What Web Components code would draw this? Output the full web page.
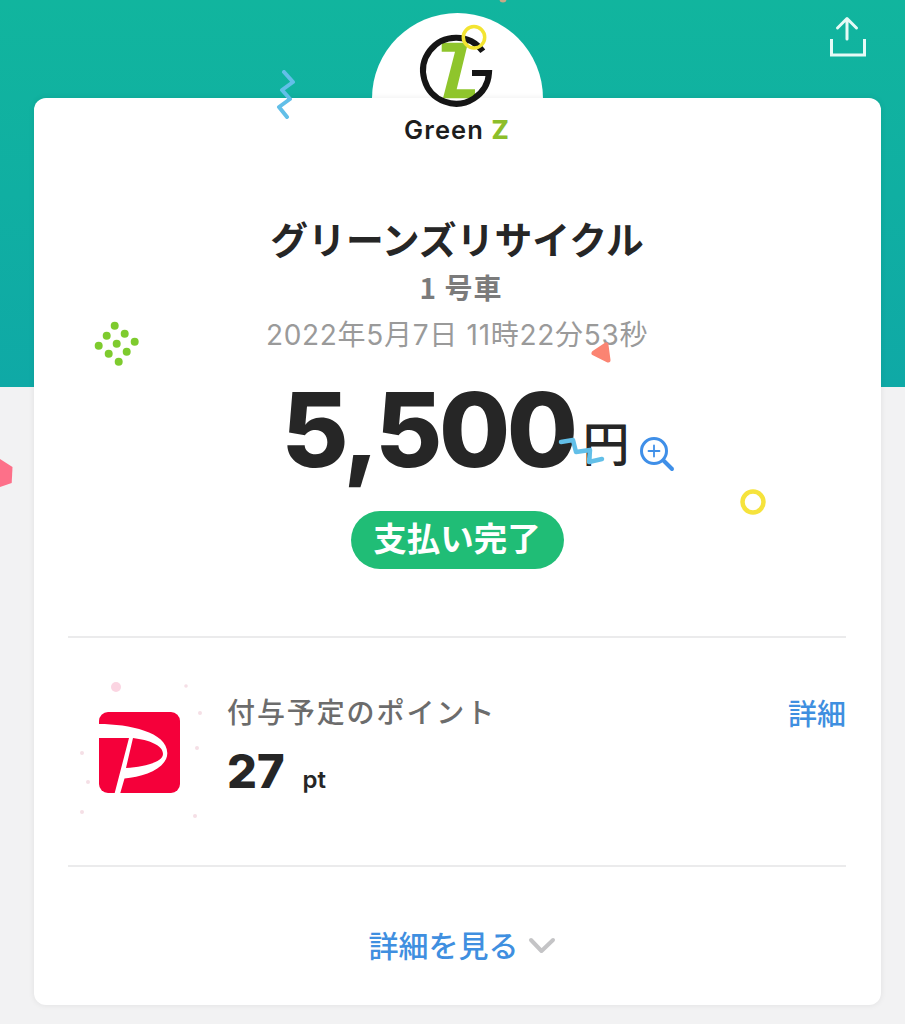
<!DOCTYPE html>
<html lang="ja">
<head>
<meta charset="utf-8">
<title>支払い完了</title>
<style>
  html, body { margin: 0; padding: 0; }
  body { font-family: "Inter", "Noto Sans CJK JP", sans-serif; }
</style>
</head>
<body>
<template id="pay-screen-tpl">
  <style>
    :host { display: block; position: relative; width: 905px; height: 1024px; overflow: hidden;
      background: linear-gradient(#11b59e 0, #0fa9a6 387px) 0 0 / 100% 387px no-repeat, #f2f2f3; }
    .bump { position: absolute; left: 372px; top: 13px; width: 171px; height: 171px; border-radius: 50%; background: #fff; }
    .share { position: absolute; left: 828px; top: 16px; }
    .deco { position: absolute; z-index: 3; }
    ::slotted(pay-card) { margin: 98px 24px 0 34px; }
  </style>
  <div class="bump"></div>
  <svg class="share" width="40" height="42" viewBox="0 0 40 42" fill="none" stroke="#e6faf6" stroke-width="3" stroke-linecap="round" stroke-linejoin="round">
    <path d="M19 23V3M9.500 12L19 2.500 28.500 12"/>
    <path d="M3.500 23V39H36.500V23" stroke-linecap="butt" stroke-linejoin="miter"/>
  </svg>
  <slot></slot>
  <svg class="deco" style="left:276px;top:70px" width="20" height="50" viewBox="0 0 20 50" fill="none" stroke="#62bfe8" stroke-width="4" stroke-linecap="round" stroke-linejoin="round">
    <path d="M8 2L17 12 6 20 14 29 3 37 11 47"/>
  </svg>
  <svg class="deco" style="left:92px;top:320px" width="48" height="48" viewBox="0 0 48 48" fill="#7ecb2e">
    <circle cx="22.700" cy="5.700" r="4"/><circle cx="14.700" cy="15.700" r="4"/><circle cx="32.700" cy="13.700" r="4"/>
    <circle cx="6.700" cy="25.700" r="4"/><circle cx="24.700" cy="23.700" r="4"/><circle cx="42.700" cy="21.700" r="4"/>
    <circle cx="16.700" cy="33.700" r="4"/><circle cx="34.700" cy="31.700" r="4"/><circle cx="26.700" cy="41.700" r="4"/>
  </svg>
  <svg class="deco" style="left:588px;top:341px" width="24" height="24" viewBox="0 0 24 24" fill="#fb8472" stroke="#fb8472" stroke-width="5" stroke-linejoin="round">
    <path d="M6 12L18 4 20 19Z"/>
  </svg>
  <svg class="deco" style="left:558px;top:436px" width="48" height="30" viewBox="0 0 48 30" fill="none" stroke="#62bfe8" stroke-width="4.500" stroke-linecap="round" stroke-linejoin="round">
    <path d="M3 6L15 4 18 16 32 14 31 26 44 23"/>
  </svg>
  <svg class="deco" style="left:740px;top:489px" width="26" height="26" viewBox="0 0 26 26" fill="none" stroke="#f6e33c" stroke-width="4.500">
    <circle cx="13" cy="13" r="10.500"/>
  </svg>
  <svg class="deco" style="left:0;top:458px" width="14" height="32" viewBox="0 0 14 32" fill="#fd7089">
    <path d="M0 1L12.500 9 11.700 25 0 29Z"/>
  </svg>
  <svg class="deco" style="left:499px;top:0" width="8" height="3" viewBox="0 0 8 3" fill="#c8a987">
    <circle cx="4" cy="-1" r="3.500"/>
  </svg>
</template>

<template id="pay-card-tpl">
  <style>
    :host { display: flex; flex-direction: column; position: relative; z-index: 1; width: 847px; height: 907px; box-sizing: border-box;
      padding: 0 35px 0 34px; background: #fff; border-radius: 12px; box-shadow: 0 0 6px rgba(0,0,0,.08); }
    hr { width: 100%; height: 2px; margin: 0; border: 0; background: #ebebec; flex: none; }
  </style>
  <slot name="logo"></slot>
  <slot name="summary"></slot>
  <hr>
  <slot name="points"></slot>
  <hr>
  <slot name="more"></slot>
</template>

<template id="brand-logo-tpl">
  <style>
    :host { display: flex; flex-direction: column; align-items: center; height: 56px; position: relative; }
    svg { position: absolute; left: 350px; top: -72px; overflow: visible; }
    .name { margin-top: 14px; font: 600 25.500px/36px "Inter", sans-serif; letter-spacing: 1.100px; color: #1d1d1d; white-space: nowrap; position: relative; }
    .z { color: #8cbe2a; font-weight: 800; }
  </style>
  <svg width="90" height="88" viewBox="0 0 90 88" fill="none">
    <path d="M23.700 16.700H50L38.700 63.300H57V72.300H25L37 25.700H23.700Z" fill="#8fc52c"/>
    <path d="M64.800 25.300A33 33 0 1 0 71 47H54" stroke="#151515" stroke-width="6"/>
    <circle cx="56" cy="11.300" r="10.700" stroke="#f3e431" stroke-width="3.500"/>
  </svg>
  <div class="name">Green <span class="z">Z</span></div>
</template>

<template id="pay-summary-tpl">
  <style>
    :host { display: flex; flex-direction: column; align-items: center; height: 482px; color: #262626; text-align: center;
      font-family: "Noto Sans CJK JP", sans-serif; }
    .shop { margin-top: 58px; font-size: 37.800px; line-height: 52px; font-weight: 700; white-space: nowrap; }
    .car { margin-top: 3px; padding-left: 8px; font-size: 28px; line-height: 40px; font-weight: 700; color: #7b7b7b; letter-spacing: 1px; }
    .date { margin-top: 9px; font-family: "Inter", "Noto Sans CJK JP", sans-serif; font-size: 28px; line-height: 38px; letter-spacing: .7px; color: #9a9a9a; white-space: nowrap; }
    .amount { display: flex; align-items: flex-end; gap: 8px; height: 104px; margin-top: 24px; margin-left: 42px; }
    .num { font: 800 103px/104px "Inter", sans-serif; letter-spacing: -3.500px; }
    .yen { font-size: 47px; line-height: 60px; font-weight: 500; margin-bottom: 11px; }
    .zoom { margin: 0 0 10px 1px; }
    .status { margin-top: 29px; width: 213px; height: 58px; border-radius: 29px; background: #20bd76; color: #fff;
      font-size: 33.500px; font-weight: 700; line-height: 52px; }
  </style>
  <div class="shop"><slot name="shop"></slot></div>
  <div class="car"><slot name="car"></slot></div>
  <div class="date"><slot name="date"></slot></div>
  <div class="amount">
    <span class="num"><slot name="amount"></slot></span>
    <span class="yen">円</span>
    <svg class="zoom" width="36" height="36" viewBox="0 0 36 36" fill="none" stroke="#3f8fe8" stroke-linecap="round">
      <circle cx="15" cy="15" r="12.500" stroke-width="3"/>
      <path d="M15 9.500V20.500M9.500 15H20.500" stroke-width="1.800"/>
      <path d="M25 25L33 33" stroke-width="4"/>
    </svg>
  </div>
  <div class="status"><slot name="status"></slot></div>
</template>

<template id="point-row-tpl">
  <style>
    :host { display: flex; height: 227px; position: relative; font-family: "Noto Sans CJK JP", sans-serif; }
    .mark { width: 129px; flex: none; margin-left: 30px; position: relative; }
    .dots { position: absolute; left: -30px; top: 0; }
    .paypay { position: absolute; left: 1px; top: 74px; }
    .text { flex: 1; padding-top: 51px; }
    .label { font-size: 28px; line-height: 44px; font-weight: 500; color: #6c6c6c; letter-spacing: 1.900px; }
    .value { display: flex; align-items: baseline; gap: 18px; margin-top: 12px; color: #262626; }
    .n { font: 800 47px/52px "Inter", sans-serif; }
    .u { font: 600 24px/24px "Inter", sans-serif; }
    .link { padding-top: 52px; font-size: 29px; line-height: 44px; font-weight: 500; color: #3f8fe0; }
  </style>
  <div class="mark">
    <svg class="dots" width="150" height="190" viewBox="0 0 150 190" fill="#f5dfe6">
      <circle cx="48" cy="49" r="5" fill="#fbd5e2"/><circle cx="118" cy="48" r="1.800"/><circle cx="132" cy="75" r="2"/>
      <circle cx="129" cy="110" r="2"/><circle cx="14" cy="115" r="2"/><circle cx="20" cy="144" r="2"/>
      <circle cx="14" cy="174" r="2"/><circle cx="127" cy="178" r="2"/>
    </svg>
    <svg class="paypay" width="81" height="81" viewBox="0 0 81 81">
      <rect width="81" height="81" rx="9" fill="#f5003a"/>
      <path fill-rule="evenodd" d="M0 12C30 12 68 20 68.300 41 68.500 56 45 65 25.500 66.500L21.300 81H15.700L30 26H0ZM34 26C50 28 64 33 64 42 64 50 45 55 27 56Z" fill="#fff"/>
    </svg>
  </div>
  <div class="text">
    <div class="label"><slot name="label"></slot></div>
    <div class="value"><span class="n"><slot name="value"></slot></span><span class="u"><slot name="unit"></slot></span></div>
  </div>
  <div class="link"><slot name="link"></slot></div>
</template>

<template id="more-link-tpl">
  <style>
    :host { display: flex; justify-content: center; align-items: center; gap: 9px; height: 136px; padding: 18px 0 0 10px; box-sizing: border-box; font-family: "Noto Sans CJK JP", sans-serif;
      font-size: 30px; font-weight: 500; color: #3f8fe0; }
    svg { margin-top: 4px; }
  </style>
  <slot></slot>
  <svg width="28" height="18" viewBox="0 0 28 18" fill="none" stroke="#c4c4c6" stroke-width="4" stroke-linecap="round" stroke-linejoin="round">
    <path d="M3 3L13.500 14 25 3"/>
  </svg>
</template>

<pay-screen>
  <pay-card>
    <brand-logo slot="logo"></brand-logo>
    <pay-summary slot="summary">
      <span slot="shop">グリーンズリサイクル</span>
      <span slot="car">1 号車</span>
      <span slot="date">2022年5月7日 11時22分53秒</span>
      <span slot="amount">5,500</span>
      <span slot="status">支払い完了</span>
    </pay-summary>
    <point-row slot="points">
      <span slot="label">付与予定のポイント</span>
      <span slot="value">27</span>
      <span slot="unit">pt</span>
      <span slot="link">詳細</span>
    </point-row>
    <more-link slot="more">詳細を見る</more-link>
  </pay-card>
</pay-screen>

<script>
  // every element just stamps its own template into an open shadow root
  const names = ['pay-screen', 'pay-card', 'brand-logo', 'pay-summary', 'point-row', 'more-link'];
  names.forEach((name) => {
    customElements.define(name, class extends HTMLElement {
      constructor() {
        super();
        this.attachShadow({ mode: 'open' });
        this.shadowRoot.appendChild(document.getElementById(`${name}-tpl`).content.cloneNode(true));
      }
    });
  });
</script>
</body>
</html>
